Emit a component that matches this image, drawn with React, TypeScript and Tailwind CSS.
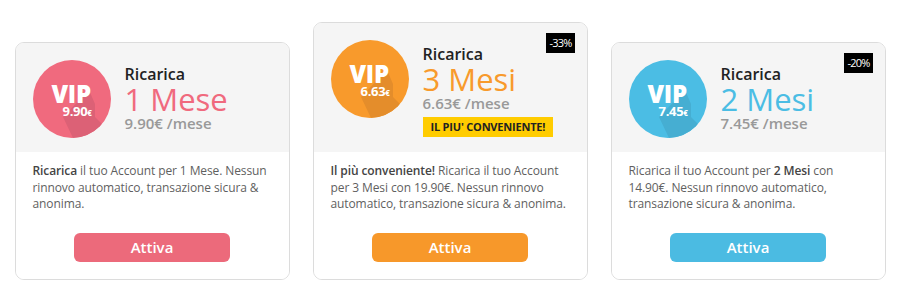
import React from 'react'

type Plan = {
  months: string
  perMonth: string
  color: string
  shadow: string
  btn: string
  discount?: string
  best?: boolean
  desc: React.ReactNode
}

const plans: Plan[] = [
  {
    months: '1 Mese',
    perMonth: '9.90',
    color: '#f06a7e',
    shadow: '#dc6176',
    btn: 'bg-[#ec6a7b]',
    desc: (
      <>
        <b className="font-semibold text-[#444]">Ricarica</b> il tuo Account per 1 Mese. Nessun rinnovo automatico, transazione sicura &amp; anonima.
      </>
    ),
  },
  {
    months: '3 Mesi',
    perMonth: '6.63',
    color: '#f89a2c',
    shadow: '#e48d2b',
    btn: 'bg-[#f7982a]',
    discount: '-33%',
    best: true,
    desc: (
      <>
        <b className="font-semibold text-[#444]">Il più conveniente!</b> Ricarica il tuo Account per 3 Mesi con 19.90€. Nessun rinnovo automatico, transazione sicura &amp; anonima.
      </>
    ),
  },
  {
    months: '2 Mesi',
    perMonth: '7.45',
    color: '#4bbde4',
    shadow: '#46aed2',
    btn: 'bg-[#4bbbe2]',
    discount: '-20%',
    desc: (
      <>
        Ricarica il tuo Account per <b className="font-semibold text-[#444]">2 Mesi</b> con 14.90€. Nessun rinnovo automatico, transazione sicura &amp; anonima.
      </>
    ),
  },
]

// cerchio VIP con ombra lunga
const VipCircle = ({ plan, id }: { plan: Plan; id: string }) => (
  <div className="relative w-[78px] h-[78px] shrink-0">
    <svg width="78" height="78" viewBox="0 0 78 78" className="absolute inset-0">
      <defs>
        <clipPath id={id}>
          <circle cx="39" cy="39" r="39" />
        </clipPath>
      </defs>
      <circle cx="39" cy="39" r="39" fill={plan.color} />
      <polygon points="56,30 62,44 62,57 110,105 60,120 30,57" fill={plan.shadow} clipPath={`url(#${id})`} />
    </svg>
    <span className="absolute left-[19px] top-[22px] text-white text-[24px] font-extrabold leading-none tracking-[-0.3px]">VIP</span>
    <span className="absolute left-[30px] top-[45px] text-white text-[13px] font-bold leading-none tracking-[-0.3px]">
      {plan.perMonth}
      <span className="text-[8px]">€</span>
    </span>
  </div>
)

const App = () => {
  return (
    <div className="w-[900px] h-[299px] bg-white flex justify-center items-end gap-[23px] pb-[19px]" style={{ fontFamily: '"Open Sans", "Noto Sans", sans-serif' }}>
      {plans.map((plan, i) => (
        <div key={i} className="relative w-[275px] bg-white border border-[#dcdcdc] rounded-[9px] overflow-hidden">
          <div className={`bg-[#f5f5f5] flex items-start px-[17px] pt-[17px] ${plan.best ? 'h-[129px]' : 'h-[109px]'}`}>
            <VipCircle plan={plan} id={`clip${i}`} />
            <div className="ml-[14px] mt-[4px] flex flex-col">
              <span className="text-[16px] font-semibold text-[#222] leading-[20px]">Ricarica</span>
              <span className="text-[31px] leading-[28px] mt-[1px]" style={{ color: plan.color }}>
                {plan.months}
              </span>
              <span className="text-[15px] font-semibold text-[#999] leading-[18px] mt-[1px]">{plan.perMonth}€ /mese</span>
              {plan.best && (
                <span className="mt-[5px] bg-[#ffcc00] text-[#222] text-[11px] font-bold px-[8px] h-[20px] flex items-center w-fit tracking-[-0.2px]">
                  IL PIU' CONVENIENTE!
                </span>
              )}
            </div>
          </div>
          {plan.discount && (
            <div className="absolute top-[10px] right-[12px] bg-black text-white text-[11px] px-[3px] h-[20px] flex items-center tracking-[-0.8px]">
              {plan.discount}
            </div>
          )}
          <div className="px-[17px] pt-[11px] h-[127px] bg-white">
            <p className="text-[12px] leading-[16.5px] tracking-[-0.1px] text-[#5f5f5f] h-[50px]">{plan.desc}</p>
            <div className="flex justify-center mt-[20px]">
              <button className={`${plan.btn} w-[156px] h-[29px] rounded-[6px] text-white text-[15px] font-semibold`}>Attiva</button>
            </div>
          </div>
        </div>
      ))}
    </div>
  )
}

export default App
